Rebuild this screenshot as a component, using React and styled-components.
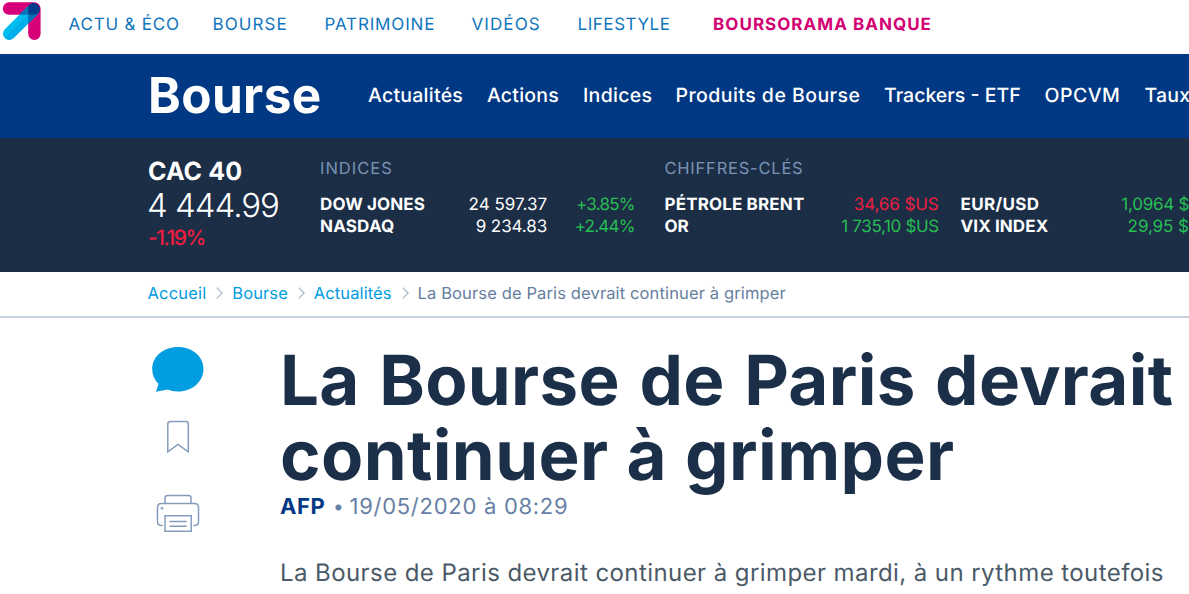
import React from 'react';
import styled, { createGlobalStyle } from 'styled-components';

const GlobalStyle = createGlobalStyle`
    * {
        box-sizing: border-box;
    }

    body {
        margin: 0;
        background: #fff;
        font-family: Inter, "Liberation Sans", sans-serif;
        text-rendering: geometricPrecision;
        overflow: hidden;
    }
`

const Page = styled.div`
    width: 1189px;
    height: 594px;
    overflow: hidden;
`

// Every label has its own tracking
const Label = styled.span`
    letter-spacing: ${props => props.$track || 0}px;
    word-spacing: ${props => props.$words || 0}px;
    white-space: nowrap;
`

const TopBar = styled.header`
    display: flex;
    height: 54px;
    padding-left: 2px;
`

const Logo = styled.svg`
    flex: none;
    width: 40px;
    height: 42px;
    margin-right: 26.5px;
`

const TopNav = styled.nav`
    display: grid;
    grid-template-columns: 144px 112px 147px 106px 135.5px auto;
    height: 51px;
    line-height: 51px;
`

const TopLink = styled(Label)`
    font-size: 17px;
    color: ${props => props.$brand ? '#d20073' : '#0f75bc'};
    font-weight: ${props => props.$brand ? 700 : 400};
`

const MainBar = styled.div`
    display: flex;
    align-items: center;
    height: 84px;
    padding: 0 0 2px 148px;
    background: #003883;
    color: #fff;
`

const Section = styled(Label)`
    flex: none;
    width: 220px;
    font-size: 49.5px;
    font-weight: 700;
    line-height: 60px;
`

const MainNav = styled.nav`
    display: grid;
    grid-template-columns: 119px 96px 92.5px 208.5px 160.5px 100px auto;
    font-size: 19.5px;
    font-weight: 500;
`

const Ticker = styled.div`
    display: flex;
    height: 134px;
    padding: 19px 0 0 148px;
    background: #1b2e46;
    color: #fff;
`

const MainIndex = styled.div`
    display: flex;
    flex-direction: column;
    flex: none;
    width: 172px;
    padding-top: 1px;
`

const IndexName = styled(Label)`
    font-size: 25px;
    font-weight: 700;
    line-height: 29px;
`

const IndexValue = styled(Label)`
    font-size: 33px;
    font-weight: 300;
    line-height: 36px;
    margin-left: -1px;
`

const IndexChange = styled(Label)`
    font-size: 21px;
    font-weight: 500;
    line-height: 32px;
    color: #ef1e40;
`

const Group = styled.div`
    flex: none;
    width: ${props => props.$width}px;
`

const GroupTitle = styled.div`
    height: 37px;
    line-height: 23px;
    font-size: 16.5px;
    color: #7b92b5;
`

const Columns = styled.div`
    display: flex;
    gap: 22px;
`

const QuoteTable = styled.div`
    display: grid;
    grid-template-columns: ${props => props.$columns};
    grid-auto-rows: 22px;
    line-height: 22px;
    font-size: 17px;
`

const QuoteName = styled(Label)`
    font-weight: 700;
`

const QuoteValue = styled(Label)`
    text-align: right;
    margin-right: ${props => (props.$track || 0)}px;
    color: ${props => props.$up ? '#26bf52' : props.$down ? '#ef1e40' : '#fff'};
`

const Breadcrumb = styled.div`
    display: flex;
    align-items: center;
    height: 46px;
    padding: 0 0 3px 147.5px;
    border-bottom: 2px solid #c5d1df;
    font-size: 16.5px;
    color: #667e9f;
`

const Crumb = styled(Label)`
    color: #009de0;
`

const Chevron = styled.svg`
    width: 7px;
    height: 12px;
    margin: 0 9px 0 9.8px;
    fill: none;
    stroke: #a3b3c7;
    stroke-width: 1.1;
`

const Article = styled.main`
    display: flex;
    padding-left: 150px;
`

const Tools = styled.aside`
    display: flex;
    flex-direction: column;
    align-items: center;
    flex: none;
    width: 56px;
    margin-right: 74px;
    padding-top: 28px;
`

const ToolIcon = styled.svg`
    flex: none;
    margin-bottom: ${props => props.$gap || 0}px;
    fill: none;
    stroke: #849dbd;
    stroke-width: 1.5;
`

const Content = styled.div`
    white-space: nowrap;
`

const Title = styled.h1`
    margin: 24.5px 0 0 0;
    font-size: 69px;
    font-weight: 700;
    line-height: 75px;
    color: #1b2f48;
`

const Byline = styled.div`
    display: flex;
    height: 28px;
    line-height: 28px;
    font-size: 22px;
    color: #6680a6;
`

const Agency = styled(Label)`
    width: 53px;
    font-weight: 700;
    color: #003883;
`

const Bullet = styled.span`
    width: 16.5px;
    font-size: 19px;
`

const Lead = styled.p`
    margin: 37px 0 0;
    font-size: 24px;
    line-height: 30px;
    color: #4b5a68;
`

const topLinks = [
    { text: 'ACTU & ÉCO', track: 0.8 },
    { text: 'BOURSE', track: 1.08 },
    { text: 'PATRIMOINE', track: 0.85 },
    { text: 'VIDÉOS', track: 1.1 },
    { text: 'LIFESTYLE', track: 0.55 },
    { text: 'BOURSORAMA BANQUE', track: 1.03, brand: true },
]

const mainLinks = [
    { text: 'Actualités', track: 0.25 },
    { text: 'Actions', track: 0.2 },
    { text: 'Indices', track: 0.3 },
    { text: 'Produits de Bourse', track: 0.45 },
    { text: 'Trackers - ETF', track: 0 },
    { text: 'OPCVM', track: 0.5 },
    { text: 'Taux', track: 0.2 },
]

const indices = [
    { name: 'DOW JONES', nameTrack: 0.1, value: '24 597.37', track: 0, change: '+3.85%' },
    { name: 'NASDAQ', nameTrack: 0.2, value: '9 234.83', track: -0.1, change: '+2.44%' },
]

const commodities = [
    { name: 'PÉTROLE BRENT', nameTrack: 0.15, value: '34,66 $US', track: -0.1, down: true },
    { name: 'OR', nameTrack: 0, value: '1 735,10 $US', track: -0.35, up: true },
]

const rates = [
    { name: 'EUR/USD', nameTrack: 0.35, value: '1,0964 $US', track: -0.25, up: true },
    { name: 'VIX INDEX', nameTrack: 0.1, value: '29,95 $US', track: -0.1, up: true },
]

function Separator() {
    return (
        <Chevron viewBox="0 0 7 12">
            <path d="M.7 .7 6.2 6 .7 11.3" />
        </Chevron>
    )
}

function Quotes({ items, columns }) {
    return (
        <QuoteTable $columns={columns}>
            {items.map(item => (
                <React.Fragment key={item.name}>
                    <QuoteName $track={item.nameTrack}>{item.name}</QuoteName>
                    <QuoteValue $track={item.track} $up={item.up} $down={item.down}>{item.value}</QuoteValue>
                    {item.change ? <QuoteValue $up $track={-0.75}>{item.change}</QuoteValue> : null}
                </React.Fragment>
            ))}
        </QuoteTable>
    )
}

function BrandLogo() {
    return (
        <Logo viewBox="2 0 40 42">
            <path fill="#d60078" d="M9 2.3H34.5A6.3 6.3 0 0 1 40.6 8.5V33.8A6.2 6.2 0 0 1 28.2 33.8V14.8H9A6.2 6.2 0 0 1 9 2.3Z" />
            <path fill="#00bdf0" d="M28.2 5.9 38.8 13 13.6 38.1A6.2 6.2 0 0 1 4.8 29.3Z" />
            <path fill="#00aeeb" d="M34.2 8.7 38.8 13 13.6 38.1A6.2 6.2 0 0 1 4.9 38.1Z" />
            <path fill="#0d72b5" d="M28.2 5.9V14.8H19.3Z" />
            <path fill="#0070b5" d="M28.2 14.8H37L28.2 23.6Z" />
            <path fill="#003c8c" d="M28.2 5.8A6.3 6.3 0 1 1 38.8 12.9L36.9 14.8H28.2Z" />
        </Logo>
    )
}

export default function App() {
    return (
        <Page>
            <GlobalStyle />
            <TopBar>
                <BrandLogo />
                <TopNav>
                    {topLinks.map(link => (
                        <TopLink key={link.text} $track={link.track} $brand={link.brand}>{link.text}</TopLink>
                    ))}
                </TopNav>
            </TopBar>
            <MainBar>
                <Section $track={0.4}>Bourse</Section>
                <MainNav>
                    {mainLinks.map(link => (
                        <Label key={link.text} $track={link.track}>{link.text}</Label>
                    ))}
                </MainNav>
            </MainBar>
            <Ticker>
                <MainIndex>
                    <IndexName $track={0.1}>CAC 40</IndexName>
                    <IndexValue $track={-1}>4 444.99</IndexValue>
                    <IndexChange $track={-1.5}>-1.19%</IndexChange>
                </MainIndex>
                <Group $width={344.5}>
                    <GroupTitle><Label $track={1}>INDICES</Label></GroupTitle>
                    <Quotes items={indices} columns="120px 107px 87px" />
                </Group>
                <Group $width={560}>
                    <GroupTitle><Label $track={0.78}>CHIFFRES-CLÉS</Label></GroupTitle>
                    <Columns>
                        <Quotes items={commodities} columns="150px 124px" />
                        <Quotes items={rates} columns="120px 131.5px" />
                    </Columns>
                </Group>
            </Ticker>
            <Breadcrumb>
                <Crumb $track={0.2}>Accueil</Crumb>
                <Separator />
                <Crumb $track={0.1}>Bourse</Crumb>
                <Separator />
                <Crumb $track={0.12}>Actualités</Crumb>
                <Separator />
                <Label $track={0.13}>La Bourse de Paris devrait continuer à grimper</Label>
            </Breadcrumb>
            <Article>
                <Tools>
                    <ToolIcon width="54" height="46" viewBox="151 346 54 46" $gap={28}>
                        <path fill="#009de0" stroke="none" d="M178 347C192.500 347 203.500 356.500 203.500 369S192.500 391.500 178 391.500C174 391.500 170.500 390.700 167.500 389.500L156 391.800 158.500 384C154.500 380 152.200 375 152.200 369 152.200 356.500 163.500 347 178 347Z" />
                    </ToolIcon>
                    <ToolIcon width="24" height="34" viewBox="166.500 420 24 34" $gap={40}>
                        <path d="M168.300 451.800V424Q168.300 421.500 170.800 421.500H186.300Q188.800 421.500 188.800 424V451.800L178.500 444.500Z" />
                    </ToolIcon>
                    <ToolIcon width="44" height="40" viewBox="156 494 44 40">
                        <path d="M165 503.500V498Q165 495.500 167.500 495.500H188.500Q191 495.500 191 498V503.500M162.700 525.500H161.500Q157.500 525.500 157.500 521.500V507.500Q157.500 503.500 161.500 503.500H194.500Q198.500 503.500 198.500 507.500V521.500Q198.500 525.500 194.500 525.500H193.500" />
                        <path d="M165 515.700H191.200V531.300H165ZM169.500 521.500H186.700M169.500 526.200H186.700" />
                        <circle cx="162" cy="508.200" r="1.3" fill="#849dbd" stroke="none" />
                    </ToolIcon>
                </Tools>
                <Content>
                    <Title>
                        <Label $track={0.33} $words={2.8}>La Bourse de Paris devrait</Label>
                        <br />
                        <Label $track={0.4} $words={1.3}>continuer à grimper</Label>
                    </Title>
                    <Byline>
                        <Agency $track={0.6}>AFP</Agency>
                        <Bullet>•</Bullet>
                        <Label $track={0.72}>19/05/2020 à 08:29</Label>
                    </Byline>
                    <Lead>
                        <Label $track={0.42}>La Bourse de Paris devrait continuer à grimper mardi, à un rythme toutefois</Label>
                    </Lead>
                </Content>
            </Article>
        </Page>
    )
}
